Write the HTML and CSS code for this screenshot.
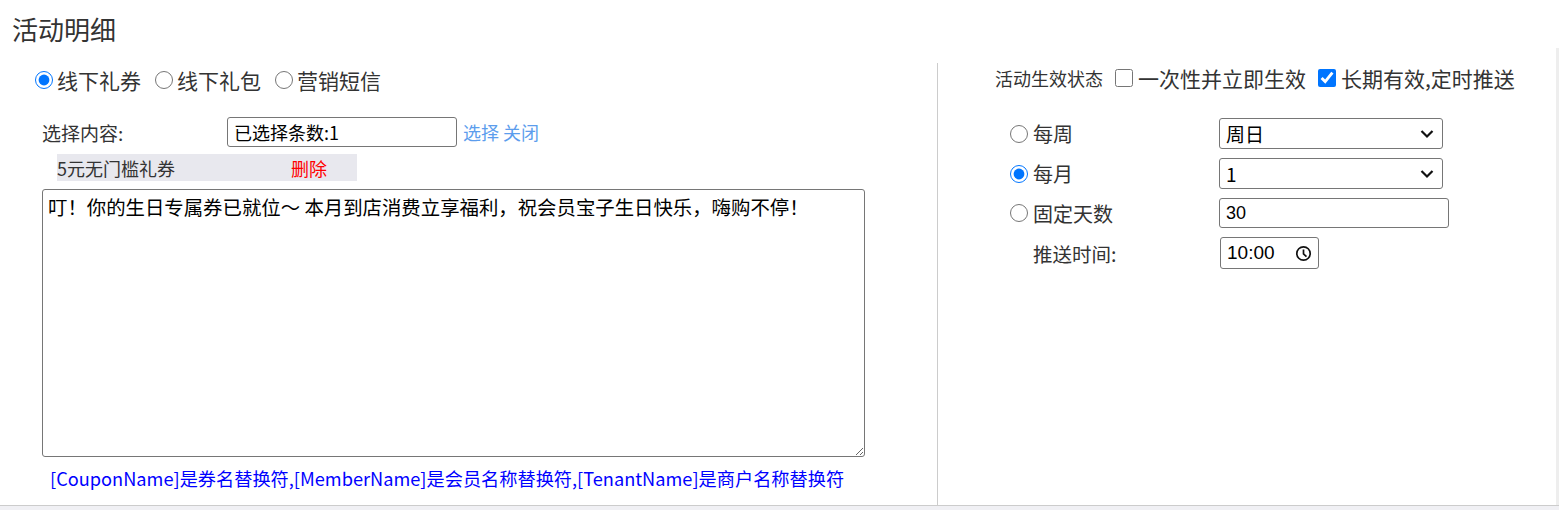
FILE: index.html
```html
<!DOCTYPE html>
<html lang="zh-CN">
<head>
<meta charset="utf-8">
<title>活动明细</title>
<link rel="stylesheet" href="styles.css">
</head>
<body>
<header class="page-head">
  <h1 class="page-title">活动明细</h1>
</header>
<div class="panel-wrap">
  <main class="panel">
    <section class="col-left">
      <div class="type-row">
        <label class="opt"><input class="radio" type="radio" name="type" checked><span>线下礼券</span></label>
        <label class="opt"><input class="radio" type="radio" name="type"><span>线下礼包</span></label>
        <label class="opt"><input class="radio" type="radio" name="type"><span>营销短信</span></label>
      </div>
      <div class="pick-row">
        <span class="pick-label">选择内容:</span>
        <input class="pick-input" type="text" value="已选择条数:1" readonly>
        <span class="links"><a class="link">选择</a> <a class="link">关闭</a></span>
      </div>
      <div class="item-row">
        <span class="item-name">5元无门槛礼券</span>
        <a class="del">删除</a>
      </div>
      <textarea class="msg">叮！你的生日专属券已就位～ 本月到店消费立享福利，祝会员宝子生日快乐，嗨购不停！</textarea>
      <p class="hint">[CouponName]是券名替换符,[MemberName]是会员名称替换符,[TenantName]是商户名称替换符</p>
    </section>
    <section class="col-right">
      <div class="status-row">
        <span class="status-label">活动生效状态</span>
        <label class="chk"><input class="check" type="checkbox"><span>一次性并立即生效</span></label>
        <label class="chk"><input class="check" type="checkbox" checked><span>长期有效,定时推送</span></label>
      </div>
      <div class="sched">
        <label class="sopt"><input class="radio" type="radio" name="freq"><span>每周</span></label>
        <div class="sel-wrap">
          <select class="sel"><option>周日</option></select>
          <svg class="chev" viewBox="0 0 14 10" width="14" height="10"><path d="M1.5 2 L7 7.5 L12.5 2" fill="none" stroke="#111" stroke-width="2.2"/></svg>
        </div>
        <label class="sopt"><input class="radio" type="radio" name="freq" checked><span>每月</span></label>
        <div class="sel-wrap">
          <select class="sel"><option>1</option></select>
          <svg class="chev" viewBox="0 0 14 10" width="14" height="10"><path d="M1.5 2 L7 7.5 L12.5 2" fill="none" stroke="#111" stroke-width="2.2"/></svg>
        </div>
        <label class="sopt"><input class="radio" type="radio" name="freq"><span>固定天数</span></label>
        <div><input class="days" type="text" value="30"></div>
        <span class="time-label">推送时间:</span>
        <div class="time-wrap">
          <input class="time" type="text" value="10:00" readonly>
          <svg class="clock" viewBox="0 0 16 16" width="17" height="17"><circle cx="8" cy="8" r="6.3" fill="none" stroke="#111" stroke-width="1.6"/><path d="M8 4.2 V8.3 L10.8 11" fill="none" stroke="#111" stroke-width="1.6"/></svg>
        </div>
      </div>
    </section>
  </main>
</div>
</body>
</html>
```
FILE: styles.css
```css
* { box-sizing: border-box; }
html, body { margin: 0; padding: 0; }
body {
  background: #f0f0f4;
  font-family: "Noto Sans CJK SC", "Liberation Sans", sans-serif;
  color: #333;
}
.page-head {
  background: #fff;
  height: 48px;
  padding: 0 12px;
}
.page-title {
  margin: 0;
  font-size: 26px;
  font-weight: normal;
  line-height: 36px;
  padding-top: 11px;
  color: #333;
}
.panel-wrap {
  background: #eeeeee;
  border-bottom: 1px solid #cccccc;
  height: 458px;
}
.panel {
  display: flex;
  width: calc(100% - 3px);
  height: 457px;
  background: #fff;
  padding-top: 15px;
}
.col-left {
  width: 937px;
  flex: none;
}
.col-right {
  flex: 1;
  border-left: 1px solid #cccccc;
}
.radio, .check {
  width: 18px;
  height: 18px;
  margin: 0;
  accent-color: #0075ff;
  flex: none;
}
.type-row {
  display: flex;
  align-items: center;
  height: 34px;
  padding-left: 35px;
}
.opt {
  display: flex;
  align-items: center;
  gap: 4px;
  margin-right: 14px;
  font-size: 21px;
  line-height: 30px;
}
.pick-row {
  display: flex;
  align-items: center;
  margin-top: 20px;
  padding-left: 42px;
  height: 30px;
}
.pick-label {
  width: 185px;
  font-size: 19px;
}
.pick-input {
  width: 230px;
  height: 30px;
  border: 1px solid #767676;
  border-radius: 3px;
  padding: 0 6px;
  font-family: "Noto Sans CJK SC", "Liberation Sans", sans-serif;
  font-size: 18px;
  color: #000;
}
.links {
  margin-left: 6px;
  font-size: 18px;
}
.link { color: #5c9ded; cursor: pointer; }
.item-row {
  display: flex;
  align-items: center;
  margin: 7px 0 0 57px;
  width: 300px;
  height: 27px;
  background: #e8e8ee;
  font-size: 18px;
}
.item-name { width: 234px; }
.del { color: #ff0000; cursor: pointer; }
.msg {
  display: block;
  margin: 8px 0 0 42px;
  width: 823px;
  height: 268px;
  border: 1px solid #767676;
  border-radius: 3px;
  padding: 4px 5px;
  font-family: "Noto Sans CJK SC", "Liberation Sans", sans-serif;
  font-size: 19.4px;
  line-height: 26px;
  color: #000;
  resize: vertical;
}
.hint {
  margin: 9px 0 0 50px;
  font-size: 18.2px;
  line-height: 24px;
  color: #0000ff;
}
.status-row {
  display: flex;
  align-items: center;
  height: 30px;
  padding-left: 57px;
}
.status-label {
  font-size: 18px;
  margin-right: 12px;
}
.chk {
  display: flex;
  align-items: center;
  gap: 5px;
  margin-right: 12px;
  font-size: 21px;
}
.sched {
  display: grid;
  grid-template-columns: 209px auto;
  grid-auto-rows: auto;
  row-gap: 9px;
  align-items: center;
  justify-items: start;
  margin-top: 25px;
  padding-left: 72px;
}
.sopt {
  display: flex;
  align-items: center;
  gap: 5px;
  font-size: 20px;
}
.time-label {
  font-size: 19.5px;
  padding-left: 23px;
}
.sel-wrap {
  position: relative;
  width: 224px;
  height: 31px;
}
.sel {
  appearance: none;
  -webkit-appearance: none;
  width: 224px;
  height: 31px;
  border: 1px solid #767676;
  border-radius: 3px;
  background: #fff;
  padding: 0 6px;
  font-family: "Noto Sans CJK SC", "Liberation Sans", sans-serif;
  font-size: 19px;
  color: #000;
}
.chev {
  position: absolute;
  right: 9px;
  top: 11px;
  pointer-events: none;
}
.days {
  width: 230px;
  height: 30px;
  border: 1px solid #767676;
  border-radius: 3px;
  padding: 0 6px;
  font-family: "Liberation Sans", sans-serif;
  font-size: 18px;
  color: #000;
}
.time-wrap {
  position: relative;
  width: 99px;
  height: 32px;
  margin-left: 1px;
}
.time {
  width: 99px;
  height: 32px;
  border: 1px solid #767676;
  border-radius: 3px;
  padding: 0 6px;
  font-family: "Liberation Sans", sans-serif;
  font-size: 19px;
  color: #000;
}
.clock {
  position: absolute;
  right: 7px;
  top: 7.5px;
  pointer-events: none;
}
```
